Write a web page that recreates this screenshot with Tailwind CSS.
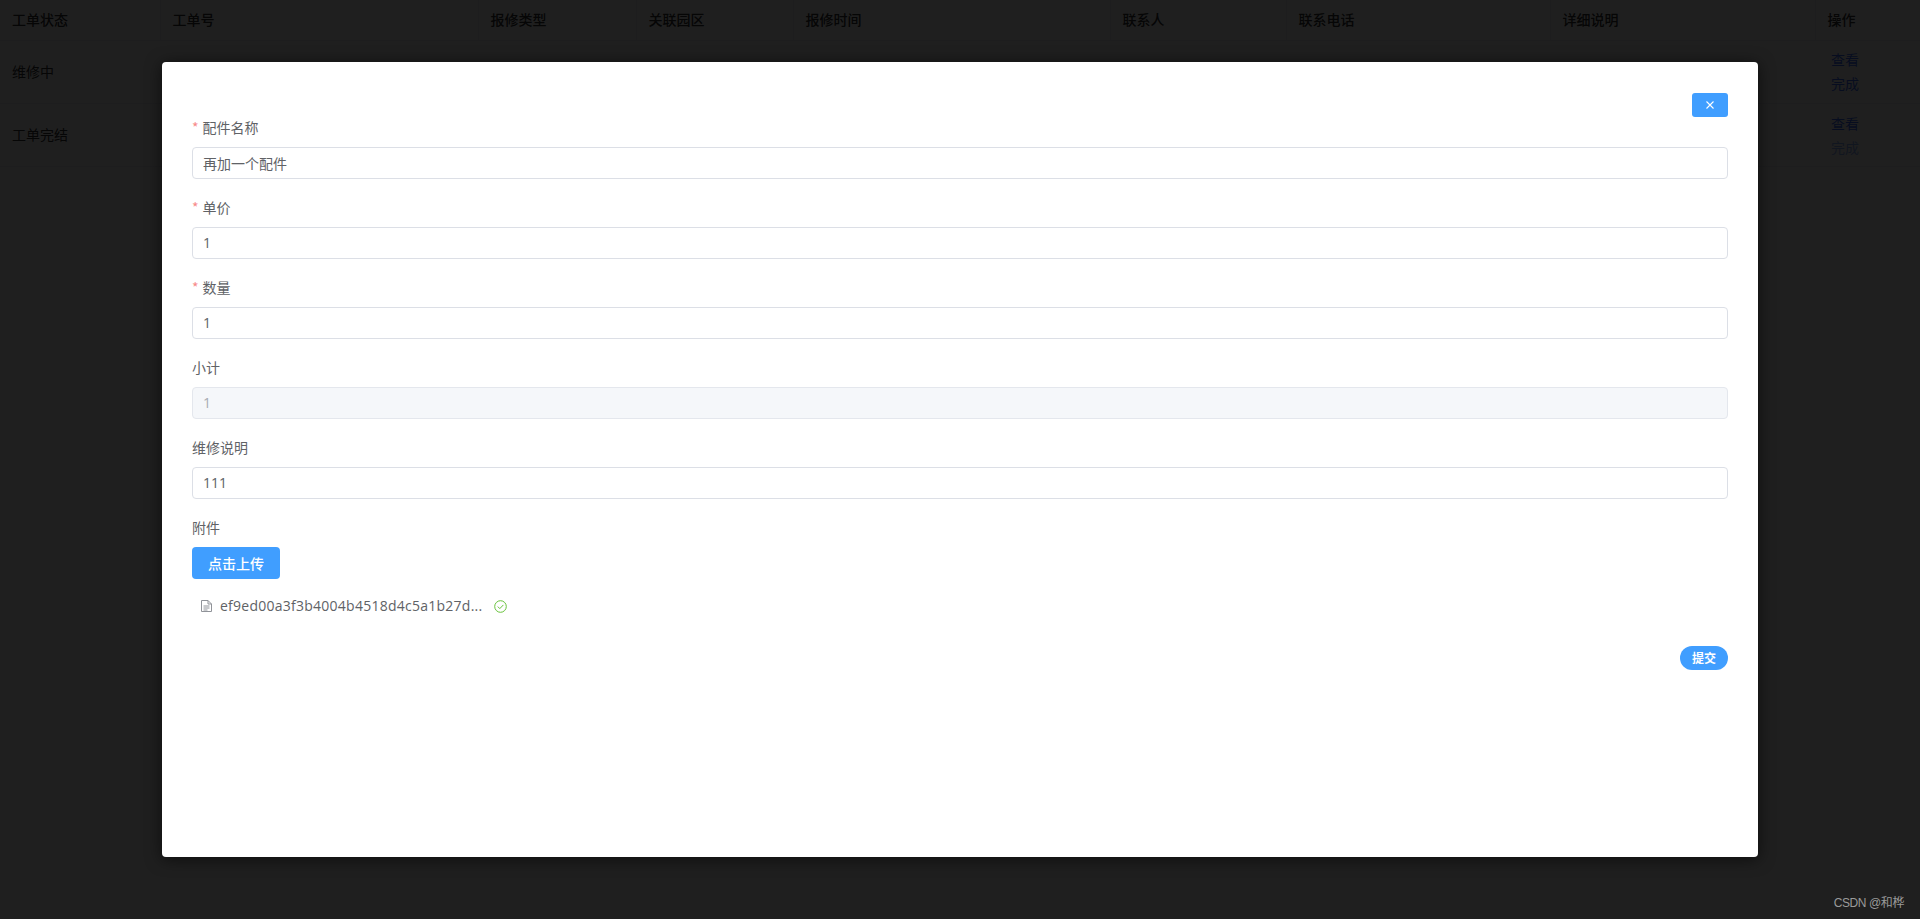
<!DOCTYPE html>
<html lang="zh-CN">
<head>
  <meta charset="UTF-8" />
  <title>工单</title>
  <script src="https://cdn.jsdelivr.net/npm/@tailwindcss/browser@4"></script>
</head>
<body class="relative h-[919px] w-[1920px] overflow-hidden bg-white font-['Noto_Sans_CJK_SC','Microsoft_YaHei',sans-serif] text-sm text-[#606266]">

  <!-- Table behind the dialog -->
  <table class="w-[1920px] -translate-y-px table-fixed border-collapse text-sm">
    <colgroup>
      <col class="w-[160px]" /><col class="w-[318px]" /><col class="w-[158px]" /><col class="w-[157px]" /><col class="w-[317px]" />
      <col class="w-[176px]" /><col class="w-[264px]" /><col class="w-[265px]" /><col class="w-[105px]" />
    </colgroup>
    <thead>
      <tr class="h-[41px] border-b border-[#ebeef5] text-left text-[#303133]">
        <th class="border-r border-[#ebeef5] px-3 font-medium">工单状态</th>
        <th class="border-r border-[#ebeef5] px-3 font-medium">工单号</th>
        <th class="border-r border-[#ebeef5] px-3 font-medium">报修类型</th>
        <th class="border-r border-[#ebeef5] px-3 font-medium">关联园区</th>
        <th class="border-r border-[#ebeef5] px-3 font-medium">报修时间</th>
        <th class="border-r border-[#ebeef5] px-3 font-medium">联系人</th>
        <th class="border-r border-[#ebeef5] px-3 font-medium">联系电话</th>
        <th class="border-r border-[#ebeef5] px-3 font-medium">详细说明</th>
        <th class="px-3 font-medium">操作</th>
      </tr>
    </thead>
    <tbody>
      <tr class="h-[63px] border-b border-[#ebeef5] text-[#303133]">
        <td class="px-3 pb-0.5">维修中</td><td></td><td></td><td></td><td></td><td></td><td></td><td></td>
        <td class="pb-px pl-4 leading-6 text-[#3b6cff]"><div>查看</div><div>完成</div></td>
      </tr>
      <tr class="h-[63px] border-b border-[#ebeef5] text-[#303133]">
        <td class="px-3 pb-0.5">工单完结</td><td></td><td></td><td></td><td></td><td></td><td></td><td></td>
        <td class="pl-4 leading-6"><div class="text-[#3b6cff]">查看</div><div class="text-[#8fb0ff]">完成</div></td>
      </tr>
    </tbody>
  </table>

  <!-- Overlay -->
  <div class="absolute inset-0 bg-black/[.88]"></div>

  <!-- Dialog -->
  <div class="absolute left-[162px] top-[62px] h-[795px] w-[1596px] rounded bg-white px-[30px] pt-[31px] shadow-[0_2px_16px_rgba(0,0,0,0.6)]">
    <div class="flex justify-end">
      <button class="flex h-6 w-9 items-center justify-center rounded-[3px] bg-[#409eff]">
        <svg class="h-2.5 w-2.5" viewBox="0 0 10 10" fill="none" stroke="#fff" stroke-width="1.1"><path d="M1.5 1.5l7 7M8.5 1.5l-7 7" /></svg>
      </button>
    </div>

    <form class="-mt-[5px]">
      <div class="mb-[13px]">
        <label class="flex h-[35px] items-center pb-[5px]"><span class="mr-1 text-[#f78989]">*</span>配件名称</label>
        <input value="再加一个配件" class="h-8 w-full rounded border border-[#dcdfe6] px-[10px] pb-px text-[#606266] outline-none" />
      </div>
      <div class="mb-[13px]">
        <label class="flex h-[35px] items-center pb-[5px]"><span class="mr-1 text-[#f78989]">*</span>单价</label>
        <input value="1" class="h-8 w-full rounded border border-[#dcdfe6] px-[10px] pb-px font-['Open_Sans',sans-serif] text-[#606266] outline-none" />
      </div>
      <div class="mb-[13px]">
        <label class="flex h-[35px] items-center pb-[5px]"><span class="mr-1 text-[#f78989]">*</span>数量</label>
        <input value="1" class="h-8 w-full rounded border border-[#dcdfe6] px-[10px] pb-px font-['Open_Sans',sans-serif] text-[#606266] outline-none" />
      </div>
      <div class="mb-[13px]">
        <label class="flex h-[35px] items-center pb-[5px]">小计</label>
        <input value="1" disabled class="h-8 w-full rounded border border-[#e4e7ed] bg-[#f5f7fa] px-[10px] pb-px font-['Open_Sans',sans-serif] text-[#a8abb2] outline-none" />
      </div>
      <div class="mb-[13px]">
        <label class="flex h-[35px] items-center pb-[5px]">维修说明</label>
        <input value="111" class="h-8 w-full rounded border border-[#dcdfe6] px-[10px] pb-px font-['Open_Sans',sans-serif] text-[#606266] outline-none" />
      </div>
      <div>
        <label class="flex h-[35px] items-center pb-[5px]">附件</label>
        <button type="button" class="h-8 w-[88px] rounded bg-[#409eff] text-sm font-medium text-white">点击上传</button>
        <div class="mt-[16px] flex h-[22px] items-center pl-[9px]">
          <svg class="mr-[8px] h-[12px] w-[11px]" viewBox="0 0 11 12" fill="none" stroke="#909399" stroke-width="1"><path d="M.5.5h6.5l3.5 3.5v7.5h-10zM7 .5v3.5h3.5M2.5 6h6M2.5 8h6M2.5 10h4" /></svg>
          <span class="w-[261px] whitespace-nowrap font-['Open_Sans',sans-serif] tracking-[0.25px]">ef9ed00a3f3b4004b4518d4c5a1b27d...</span>
          <svg class="ml-[13px] h-[13px] w-[13px]" viewBox="0 0 13 13" fill="none" stroke="#67c23a" stroke-width="1"><circle cx="6.5" cy="6.5" r="5.8" /><path d="M3.8 6.6l2 2 3.6-3.7" /></svg>
        </div>
      </div>
      <div class="mt-[29px] flex justify-end">
        <button type="button" class="h-6 w-12 rounded-full bg-[#409eff] text-xs font-bold text-white">提交</button>
      </div>
    </form>
  </div>

  <span class="absolute right-[16px] top-[895px] font-['Liberation_Sans','Noto_Sans_CJK_SC',sans-serif] text-xs tracking-[-0.4px] text-[#9a9a9a]">CSDN @和桦</span>
</body>
</html>
